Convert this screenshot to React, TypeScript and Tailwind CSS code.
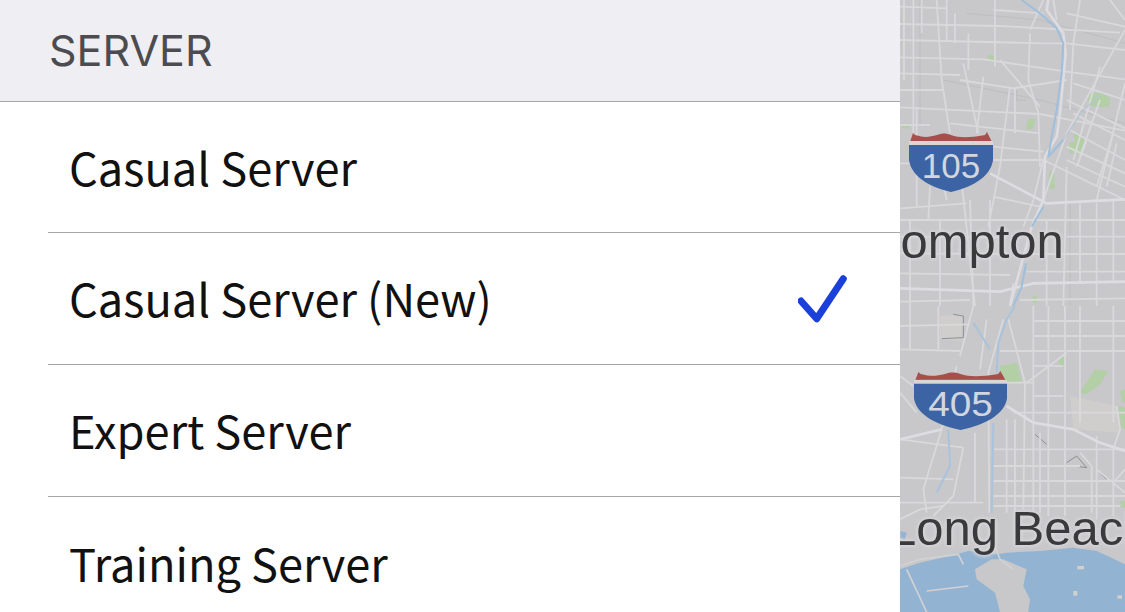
const servers = [
  { name: "Casual Server", checked: false },
  { name: "Casual Server (New)", checked: true },
  { name: "Expert Server", checked: false },
  { name: "Training Server", checked: false },
];

// map drawing, coordinates are in 1/3 px
const streets = [
  "M0 72L300 78L660 98", "M0 120L430 130L500 130", "M0 172L250 178L500 215L675 238", "M180 240L340 265L500 240",
  "M0 220L180 225", "M0 270L130 270", "M0 322L420 342L675 392", "M0 375L90 375", "M150 370L420 400", "M280 440L430 455",
  "M280 480L430 480L675 600", "M0 490L30 490", "M280 590L420 620", "M0 625L200 610", "M0 660L675 660",
  "M0 710L320 712", "M500 710L675 710", "M0 760L330 762", "M380 762L675 762", "M0 820L330 825", "M380 815L675 815",
  "M500 130L675 150", "M500 300L675 385", "M500 480L675 560", "M500 40L675 80", "M510 390L675 480",
  "M520 340L675 420", "M500 440L675 520", "M520 250L675 300", "M0 20L140 25", "M280 30L430 40",
  "M12 0L12 240", "M40 0L40 400", "M65 0L65 100", "M110 0L125 240L150 400", "M140 0L140 120", "M165 40L165 130",
  "M205 100L205 210", "M285 0L285 200", "M190 190L235 400", "M345 265L345 400", "M250 230L230 400", "M300 180L420 320",
  "M390 100L385 240L415 340L420 500", "M430 0L390 90", "M330 260L300 500L265 680", "M50 320L50 620", "M90 560L85 660",
  "M180 500L225 918", "M210 600L220 918", "M30 660L30 918", "M120 660L120 918", "M270 600L270 918",
  "M540 610L540 850", "M590 610L590 850", "M640 600L640 850", "M500 500L490 918", "M440 660L440 850",
  "M540 0L520 130L510 330", "M675 90L500 400L430 600", "M630 0L675 60", "M600 200L520 480", "M675 250L590 600",
  "M640 400L590 560", "M430 480L400 600L370 680", "M340 850L330 918", "M460 0L470 60", "M120 500L140 600",
  "M600 300L540 470", "M560 420L530 500", "M650 430L620 560", "M0 905L210 900", "M360 900L675 895", "M590 850L590 918", "M440 850L440 918",
];
const majors = [
  "M270 520L440 610L675 598", "M0 865L300 875L400 850L675 845",
  "M445 0L440 30L490 100L497 160L480 340L470 410L435 470L430 600L395 680L330 918",
];
const lowerStreets = [
  "M30 0L30 130", "M115 0L115 130", "M0 60L210 55", "M0 130L180 135", "M0 400L190 425", "M0 515L160 520",
  "M0 590L250 590", "M220 0L180 150", "M260 40L240 190", "M310 40L265 200L268 620", "M325 40L375 230L370 610",
  "M400 0L400 630", "M445 0L445 630", "M495 0L495 630", "M540 0L540 350", "M590 390L590 640", "M640 0L640 350", "M640 430L640 630",
  "M400 45L675 45", "M400 90L675 90", "M300 135L500 135", "M500 135L675 135", "M380 230L500 140", "M320 230L400 230",
  "M400 180L490 180", "M400 270L490 270", "M340 320L675 320", "M280 430L675 430", "M280 480L540 480", "M280 525L675 525",
  "M280 570L675 570", "M280 600L660 600", "M225 380L225 590", "M320 340L320 620", "M345 340L345 620", "M420 380L420 620",
  "M190 425L160 570L100 630", "M125 370L70 550L80 620", "M540 440L575 480L575 620", "M650 300L660 370L640 430",
  "M590 490L675 560", "M0 640L60 610L130 600", "M675 490L640 530", "M0 260L50 320", "M0 210L40 240", "M170 180L125 370",
];

function MapBackground() {
  return (
    <svg viewBox="0 0 675 1836" className="block h-[612px] w-[225px] blur-[0.6px]">
      <rect width="675" height="1836" fill="#c8c7ca" />
      <g fill="#b2cfa6">
        <path d="M262 166L280 166L287 186L270 186Z" />
        <path d="M384 356L406 356L398 388L378 388Z" />
        <path d="M565 280L605 278L632 296L625 322L565 318Z" />
        <path d="M520 402L548 405L553 428L540 462L508 458L506 430L525 425Z" />
        <path d="M448 515L462 515L464 568L446 565Z" />
        <path d="M5 377L30 377L30 385L5 385Z" />
        <path d="M398 888L412 888L410 910L400 908Z" />
      </g>
      <g fill="none" stroke="#b9b8bb" strokeWidth="2">
        <path d="M130 240L420 300L675 370" />
        <path d="M200 40L420 60L675 130" />
        <path d="M60 0L60 380" />
        <path d="M510 610L510 918" />
        <path d="M350 270L350 300L380 300" />
      </g>
      <g fill="none" stroke="#d9d8db" strokeWidth="5.5">
        {streets.map((d) => (
          <path key={d} d={d} />
        ))}
      </g>
      <g fill="none" stroke="#dddce0" strokeWidth="8">
        {majors.map((d) => (
          <path key={d} d={d} />
        ))}
      </g>
      <g fill="none" stroke="#9fbfdc" strokeWidth="6">
        <path d="M365 0L420 40L470 85L490 130L485 220L470 330L455 410L445 470" />
        <path d="M490 420L445 470" />
        <path d="M430 620L395 680" />
        <path d="M378 790L365 860L340 918" />
      </g>
      <path d="M600 285L545 335L490 420" fill="none" stroke="#b7c6d6" strokeWidth="4" />

      <g transform="translate(0 918)">
        <g fill="#cfcecd">
          <path d="M120 30L190 25L190 105L120 100Z" />
          <path d="M510 270L650 300L655 380L520 370Z" />
        </g>
        <g fill="#b2cfa6">
          <path d="M300 180L350 170L365 225L325 232L300 205Z" />
          <path d="M475 160L495 150L495 180L480 180Z" />
          <path d="M585 190L625 195L600 235L560 265L540 260Z" />
          <path d="M660 255L675 250L675 290L665 285Z" />
          <path d="M655 300L675 305L675 370L665 365Z" />
          <path d="M660 585L675 585L675 605L665 605Z" />
        </g>
        <g fill="none" stroke="#8f8f92" strokeWidth="3">
          <path d="M500 470L530 450L560 485L520 480" />
          <path d="M600 500L620 520" />
          <path d="M160 25L190 30L190 95L125 98" />
          <path d="M405 385L440 415" />
        </g>
        <g fill="none" stroke="#d9d8db" strokeWidth="5.5">
          {lowerStreets.map((d) => (
            <path key={d} d={d} />
          ))}
        </g>
        <g fill="none" stroke="#dddce0" strokeWidth="8">
          <path d="M320 300L400 350L520 370L600 410L675 435" />
          <path d="M0 400L125 370" />
        </g>
        <g fill="none" stroke="#a9c3dc" strokeWidth="6">
          <path d="M345 0L320 40L295 110L290 200" />
          <path d="M220 50L270 130" />
          <path d="M280 350L275 620" />
          <path d="M145 370L150 480L110 560" />
        </g>
        <path
          d="M0 790L60 770L170 745L205 735L290 745L320 740L420 735L520 725L590 735L675 775L675 918L0 918Z"
          fill="#93b3d2"
        />
        <path d="M0 675L20 680L15 700L0 695Z" fill="#93b3d2" />
        <path
          d="M225 790L275 760L310 760L380 790L370 840L390 880L385 918L300 918L285 860L230 820Z"
          fill="#c8c7ca"
        />
        <g fill="none" stroke="#d2d1d3" strokeWidth="5">
          <path d="M20 790L80 918" />
          <path d="M80 855L205 840" />
          <path d="M0 780L60 760L175 745L190 775" />
          <path d="M285 720L300 760L340 790" />
        </g>
        <g fill="#d2d0cc">
          <rect x="532" y="780" width="20" height="10" />
          <rect x="520" y="855" width="12" height="14" />
          <rect x="652" y="868" width="14" height="10" />
        </g>
      </g>
    </svg>
  );
}

function Shield({ label, className }: { label: string; className: string }) {
  return (
    <svg viewBox="0 0 84 61" preserveAspectRatio="none" className={className}>
      <path
        d="M1 10L4 1L6 3C16 6 20 5 28 3C34 1 36 1 42 3C50 6 60 6 76 3L78 0L83 10Z"
        fill="#a74f4c"
      />
      <rect x="0" y="9" width="84" height="4" fill="#d9d6d6" />
      <path d="M0 13H84V28C82 42 68 54 42 60C16 54 2 42 0 28Z" fill="#3c63a3" />
      <text
        x="42"
        y="46"
        textAnchor="middle"
        fontSize="35"
        fill="#d2d6df"
        style={{ fontFamily: '"Liberation Sans", Arial, sans-serif' }}
      >
        {label}
      </text>
    </svg>
  );
}

export default function App() {
  return (
    <div className="flex h-[612px] w-[1125px] overflow-hidden bg-white">
      {/* SETTINGS LIST */}
      <div className="w-[900px] shrink-0">
        <div className="flex h-[102px] items-center border-b border-[#a7a7aa] bg-[#eeeef3] pl-[49px] font-['Inter',sans-serif] text-[43px] leading-none text-[#4c4c50]">
          SERVER
        </div>

        <div className="pl-[48px] font-['Noto_Sans_CJK_JP','Noto_Sans',sans-serif] text-[45.2px] leading-none text-[#111]">
          {servers.map((server, i) => (
            <div
              key={server.name}
              className={`flex h-[132px] items-center justify-between pb-[1px] pl-[21px] pr-[50px] first:h-[131px] ${
                i < servers.length - 1 ? "border-b border-[#a7a7aa]" : ""
              }`}
            >
              <span>{server.name}</span>
              {server.checked && (
                <svg viewBox="0 0 52 50" className="h-[50px] w-[52px]">
                  <path
                    d="M3 28L18.7 45.8L45.3 5.8"
                    fill="none"
                    stroke="#1a40d9"
                    strokeWidth="7"
                    strokeLinecap="round"
                    strokeLinejoin="round"
                  />
                </svg>
              )}
            </div>
          ))}
        </div>
      </div>

      {/* MAP */}
      <div className="relative h-[612px] w-[225px] overflow-hidden font-['Liberation_Sans',Arial,sans-serif] text-[49px] leading-none text-[#3a3a3c]">
        <MapBackground />
        <Shield label="105" className="absolute left-[9px] top-[132px] h-[61px] w-[84px]" />
        <Shield label="405" className="absolute left-[14px] top-[371px] h-[60px] w-[93px]" />
        <span className="absolute left-[-35px] top-[217px] [text-shadow:0_0_4px_#d8d7da,0_0_4px_#d8d7da,0_0_4px_#d8d7da]">Compton</span>
        <span className="absolute left-[-11px] top-[504px] whitespace-nowrap [text-shadow:0_0_4px_#d8d7da,0_0_4px_#d8d7da,0_0_4px_#d8d7da]">Long Beach</span>
      </div>
    </div>
  );
}
